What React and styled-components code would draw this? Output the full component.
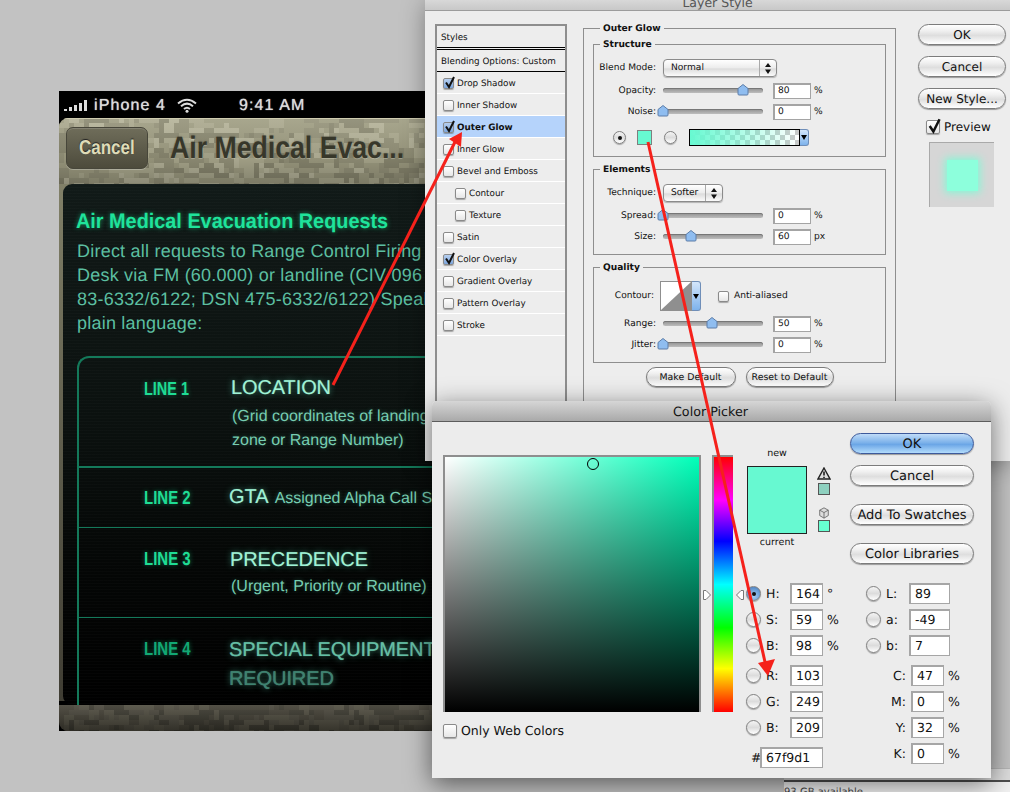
import styled, { createGlobalStyle } from "styled-components"

const Global = createGlobalStyle`
  html, body { margin: 0; padding: 0; }
  body {
    width: 1010px;
    height: 792px;
    overflow: hidden;
    background: #c2c2c2;
    font-family: "DejaVu Sans", sans-serif;
    text-rendering: geometricPrecision;
    color: #111;
  }
`

const Desktop = styled.div`
  position: relative;
  width: 1010px;
  height: 792px;
  overflow: hidden;
`

/* ---------- camo texture ---------- */

const camoColors = ["#a6a48a", "#8f8d75", "#b0ae95", "#9a987e", "#85836c"]

const Camo = ({ w, h, palette = camoColors, seed = 7 }) => {
    const blocks = []
    let r = seed
    for (let y = 0; y < h; y += 5) {
        for (let x = 0; x < w; x += 5) {
            r = (r * 1103515245 + 12345) & 0x7fffffff
            if ((r >> 8) % 5 > 1) continue
            const c = palette[(r >> 12) % palette.length]
            const bw = 5 * (1 + ((r >> 16) % 5))
            blocks.push(<rect key={x + "-" + y} x={x} y={y} width={bw} height={(r >> 20) % 2 ? 5 : 10} fill={c} />)
        }
    }
    return <CamoSvg width={w} height={h} shapeRendering="crispEdges">{blocks}</CamoSvg>
}

const CamoSvg = styled.svg`
  position: absolute;
  inset: 0;
`

/* ---------- phone ---------- */

const Phone = styled.div`
  position: absolute;
  left: 59px;
  top: 91px;
  width: 380px;
  height: 640px;
  z-index: 0;
  display: flex;
  flex-direction: column;
  background: linear-gradient(to bottom, #000 60px, #85846b 60px, #3f3d33 610px, #000 610px);
  font-family: "Liberation Sans", Arial, sans-serif;
`

const StatusBar = styled.div`
  height: 27px;
  flex: none;
  box-sizing: border-box;
  display: flex;
  align-items: center;
  padding: 2px 0 0 5px;
  color: #dcdcdc;
  font-size: 16px;
  letter-spacing: 1.1px;
  text-shadow: 0 0 1px #ddd;
`

const Carrier = styled.span`
  margin-left: 4px;
`

const Clock = styled.span`
  margin-left: 42px;
`

const WifiIcon = styled.svg`
  margin-left: 11px;
`

const NavBar = styled.div`
  position: relative;
  height: 66px;
  flex: none;
  display: flex;
  align-items: center;
  padding: 0 7px 6px;
  box-sizing: border-box;
  gap: 22px;
  overflow: hidden;
  background: #9a987e;
  border-radius: 9px 0 0 0;
`

const NavShade = styled.div`
  position: absolute;
  inset: 0;
  background: linear-gradient(to bottom, rgba(255,255,240,.14), rgba(0,0,0,.04) 60%, rgba(0,0,0,.2));
  box-shadow: inset 0 1px 0 #cfccb0;
`

const CancelButton = styled.div`
  position: relative;
  width: 82px;
  height: 42px;
  flex: none;
  box-sizing: border-box;
  display: flex;
  align-items: center;
  justify-content: center;
  border-radius: 7px;
  border: 1px solid #47463a;
  background: linear-gradient(to bottom, #6f6d5a, #4d4b3c);
  box-shadow: 0 1px 0 rgba(255,255,255,.25), inset 0 1px 0 rgba(255,255,255,.15);
  color: #dedbb8;
  font-size: 20px;
  font-weight: 700;
  text-shadow: 0 -1px 1px #222;
`

const Squeeze = styled.span`
  display: inline-block;
  white-space: nowrap;
  transform: scaleX(${p => p.$x});
  transform-origin: ${p => p.$origin || "left"} center;
`

const NavTitle = styled.div`
  position: relative;
  font-size: 31px;
  font-weight: 700;
  color: #37372a;
  text-shadow: 0 1px 1px rgba(255,255,235,.35), 0 0 2px rgba(0,0,0,.35);
`

const Screen = styled.div`
  flex: 1;
  margin-left: 4px;
  min-height: 0;
  overflow: hidden;
  border-radius: 9px 0 0 9px;
  padding: 25px 0 0 13px;
  background:
    repeating-linear-gradient(to bottom, rgba(255,255,255,.016) 0 1px, transparent 1px 3px),
    linear-gradient(to bottom, #111a18, #0b110f 45%, #040605 75%, #000);
`

const Heading = styled.div`
  font-size: 21px;
  line-height: 26px;
  font-weight: 700;
  color: #1fe39b;
  text-shadow: 0 0 6px rgba(30,230,155,.55);
`

const Intro = styled.div`
  margin: 4px 0 0 1px;
  font-size: 18px;
  line-height: 24px;
  letter-spacing: .22px;
  color: #5cbfa1;
  white-space: nowrap;
`

const LineTable = styled.div`
  margin: 21px 0 0 1px;
  border: solid #14795a;
  border-width: 2px 0 0 2px;
  border-radius: 12px 0 0 0;
`

const LineRow = styled.div`
  display: grid;
  grid-template-columns: 65px 87px 1fr;
  height: ${p => p.$h}px;
  box-sizing: border-box;
  padding-top: ${p => p.$pad}px;
  border-bottom: ${p => p.$rule}px solid #14795a;
`

const LineLabel = styled.div`
  grid-column: 2;
  font-size: 19px;
  line-height: 24px;
  font-weight: 700;
  color: ${p => p.$color || "#1fdc94"};
  text-shadow: 0 0 6px rgba(30,220,150,.45);
`

const LineValue = styled.div`
  grid-column: 3;
  margin-top: ${p => p.$top}px;
  margin-left: ${p => p.$left || 0}px;
  white-space: nowrap;
`

const Term = styled.div`
  font-size: 20px;
  line-height: 30px;
  margin-top: ${p => p.$mt || 0}px;
  letter-spacing: -.1px;
  color: ${p => p.$color || "#9ff2d5"};
  text-shadow: 0 0 1px rgba(160,245,215,.5), 0 0 6px rgba(100,240,200,.55);
`

const InlineTerm = styled.span`
  font-size: 20px;
  color: #9ff2d5;
  text-shadow: 0 0 1px rgba(160,245,215,.5), 0 0 6px rgba(100,240,200,.55);
`

const InlineNote = styled.span`
  margin-left: 6px;
  font-size: 16px;
  color: #77cdb1;
  text-shadow: 0 0 4px rgba(100,240,200,.3);
`

const Note = styled.div`
  margin: ${p => p.$mt || 0}px 0 0 1px;
  font-size: 16px;
  line-height: 24px;
  color: #77cdb1;
  text-shadow: 0 0 4px rgba(100,240,200,.3);
`

const FootBar = styled.div`
  position: relative;
  height: 26px;
  flex: none;
  overflow: hidden;
  background: #403d33;
  border-radius: 0 0 0 9px;
`

const FootShade = styled.div`
  position: absolute;
  inset: 0;
  background: linear-gradient(to bottom, rgba(255,255,240,.1), rgba(0,0,0,.3));
`

/* ---------- Layer Style window ---------- */

const LayerWindow = styled.div`
  position: absolute;
  left: 425px;
  top: 0;
  width: 585px;
  height: 461px;
  z-index: 1;
  background: #ededed;
  box-shadow: 0 4px 22px rgba(0,0,0,.35);
  font-size: 9.1px;
`

const TitleStrip = styled.div`
  height: 10px;
  overflow: hidden;
  border-bottom: 1px solid #9c9c9c;
  background: linear-gradient(to bottom, #d8d8d8, #c8c8c8);
  display: flex;
  justify-content: center;
  color: #555;
  font-size: 12.5px;
  line-height: 5px;
`

const LayerBody = styled.div`
  display: flex;
  padding: 13px 0 0 10px;
`

const StyleList = styled.div`
  width: 128px;
  height: 400px;
  flex: none;
  border: 2px solid #8e8e8e;
  border-bottom: 0;
  font-size: 8.8px;
`

const ListHead = styled.div`
  height: 19px;
  padding: 2px 0 0 4px;
  display: flex;
  align-items: center;
  border-bottom: ${p => p.$double ? "3px double #000" : "1px solid #000"};
`

const ListRow = styled.div`
  height: 19px;
  display: flex;
  align-items: center;
  gap: 3px;
  padding: 2px 0 0 ${p => p.$indent ? 18 : 6}px;
  border-bottom: 1px solid #fff;
  background: ${p => p.$active ? "#b5d3fb" : "transparent"};
  font-weight: ${p => p.$active ? 700 : 400};
`

const Box = styled.span`
  position: relative;
  width: ${p => p.$size || 9}px;
  height: ${p => p.$size || 9}px;
  flex: none;
  border: 1px solid #8a8a8a;
  border-radius: 2px;
  background: ${p => p.$tint
    ? "linear-gradient(to bottom, #b6cff0, #7da6dc)"
    : "linear-gradient(to bottom, #fff, #e6e6e6)"};
  box-shadow: 0 1px 1px rgba(0,0,0,.3);
`

const Tick = styled.svg`
  position: absolute;
  left: -1px;
  top: -3px;
`

const Check = ({ on, size, plain }) => (
    <Box $tint={on && !plain} $size={size}>
        {on && (
            <Tick width={(size || 9) + 4} height={(size || 9) + 4} viewBox="0 0 13 13">
                <path d="M3 6.5 L6 11 L11 1" fill="none" stroke="#111" strokeWidth="2" />
            </Tick>
        )}
    </Box>
)

const OuterGroup = styled.div`
  position: relative;
  margin-left: 16px;
  width: 313px;
  height: 390px;
  flex: none;
  box-sizing: border-box;
  padding: 15px 9px 0;
  border: 1px solid #8e8e8e;
  border-bottom: 0;
  margin-top: 4px;
  display: flex;
  flex-direction: column;
  gap: 12px;
`

const Group = styled.div`
  position: relative;
  height: ${p => p.$h}px;
  flex: none;
  box-sizing: border-box;
  padding-top: ${p => p.$pad}px;
  border: 1px solid #8e8e8e;
`

const Legend = styled.span`
  position: absolute;
  left: ${p => p.$left}px;
  top: -5px;
  padding: 0 3px;
  line-height: 11px;
  background: #ededed;
  font-weight: 700;
`

const FormRow = styled.div`
  display: grid;
  grid-template-columns: 69px 110px 38px auto;
  align-items: center;
  height: 21px;
  margin-top: ${p => p.$mt || 0}px;
`

const FormLabel = styled.span`
  text-align: right;
  padding-right: 7px;
`

const Slider = styled.div`
  position: relative;
  width: 100px;
  height: 5px;
  border-radius: 3px;
  background: linear-gradient(to bottom, #8f8f8f, #bdbdbd);
  box-shadow: inset 0 1px 0 #777;
`

const Thumb = styled.svg`
  position: absolute;
  left: ${p => p.$at - 6}px;
  top: -4px;
`

const RangeRow = ({ label, at, value, unit, mt }) => (
    <FormRow $mt={mt}>
        <FormLabel>{label}</FormLabel>
        <Slider>
            <Thumb $at={at} width="12" height="12" viewBox="0 0 12 12">
                <path d="M6 .5 L11 4.5 V10 Q11 11 10 11 H2 Q1 11 1 10 V4.5 Z" fill="#8fbdf0" stroke="#5d7da8" />
            </Thumb>
        </Slider>
        <NumField>{value}</NumField>
        <Unit>{unit}</Unit>
    </FormRow>
)

const NumField = styled.div`
  height: 16px;
  box-sizing: border-box;
  border: 1px solid #a4a4a4;
  border-width: 2px 1px 1px 2px;
  background: #fff;
  padding-left: 3px;
  line-height: 12px;
`

const Unit = styled.span`
  padding-left: 3px;
`

const Select = styled.div`
  position: relative;
  width: ${p => p.$w}px;
  height: 18px;
  box-sizing: border-box;
  display: flex;
  align-items: center;
  padding-left: 7px;
  border: 1px solid #8b8b8b;
  border-radius: 4px;
  background: linear-gradient(to bottom, #fff, #ececec 50%, #dcdcdc 55%, #fbfbfb);
  box-shadow: 0 1px 1px rgba(0,0,0,.25);
`

const Stepper = styled.svg`
  position: absolute;
  right: 0;
  top: 0;
  border-left: 1px solid #aaa;
`

const StepIcon = () => (
    <Stepper width="16" height="16" viewBox="0 0 16 16">
        <path d="M8 3 L11 7 H5 Z M8 14 L11 9.5 H5 Z" fill="#111" />
    </Stepper>
)

const SwatchRow = styled.div`
  display: flex;
  align-items: center;
  height: 21px;
  margin-top: 5px;
  padding-left: 19px;
`

const Radio = styled.span`
  width: ${p => p.$size || 13}px;
  height: ${p => p.$size || 13}px;
  flex: none;
  box-sizing: border-box;
  display: flex;
  align-items: center;
  justify-content: center;
  border-radius: 50%;
  border: 1px solid #808080;
  background: ${p => p.$blue
    ? "radial-gradient(circle at 50% 70%, #a6d0f6, #3f78bd)"
    : "linear-gradient(to bottom, #f4f4f4, #dcdcdc 50%, #fff)"};
  box-shadow: 0 1px 1px rgba(0,0,0,.3);
  &::after {
    content: "";
    display: ${p => p.$on ? "block" : "none"};
    width: 4px;
    height: 4px;
    border-radius: 50%;
    background: #111;
  }
`

const ColorChip = styled.div`
  width: 15px;
  height: 15px;
  margin: 0 12px 0 11px;
  box-sizing: border-box;
  border: 1px solid #7f7f7f;
  background: #67f9d1;
`

const GradientStrip = styled.div`
  width: 111px;
  height: 17px;
  margin-left: 12px;
  box-sizing: border-box;
  border: 1px solid #000;
  background:
    linear-gradient(to right, #67f9d1, rgba(103,249,209,0)),
    repeating-conic-gradient(#c9c9c9 0 25%, #fff 0 50%) 0 0 / 10px 10px;
`

const DropTab = styled.div`
  width: 8px;
  height: ${p => p.$h}px;
  display: flex;
  align-items: center;
  justify-content: center;
  border: 1px solid #6f8eb8;
  border-left: 0;
  border-radius: 0 3px 3px 0;
  background: linear-gradient(to bottom, #d4e6fb, #7eb3ec);
  &::after {
    content: "";
    border: 3px solid transparent;
    border-top: 5px solid #000;
    border-bottom: 0;
  }
`

const ContourRow = styled.div`
  display: flex;
  align-items: center;
  height: 30px;
`

const ContourLabel = styled(FormLabel)`
  width: 60px;
  padding-right: 6px;
`

const ContourBox = styled.svg`
  flex: none;
  border: 1px solid #8f8f8f;
`

const AliasCheck = styled.div`
  display: flex;
  align-items: center;
  gap: 5px;
  margin-left: 17px;
`

const ActionRow = styled.div`
  display: flex;
  justify-content: center;
  gap: 10px;
  margin-top: -8px;
`

const Pill = styled.div`
  box-sizing: border-box;
  height: ${p => p.$h || 21}px;
  width: ${p => p.$w ? p.$w + "px" : "auto"};
  padding-top: 1px;
  display: flex;
  align-items: center;
  justify-content: center;
  white-space: nowrap;
  border: 1px solid ${p => p.$primary ? "#3d5a9b" : "#7c7c7c"};
  border-radius: 11px;
  font-size: ${p => p.$font || 12}px;
  background: ${p => p.$primary
    ? "linear-gradient(to bottom, #c0dcf8, #7db2ea 45%, #6ba6e6 55%, #b3dcfc)"
    : "linear-gradient(to bottom, #fff, #f0f0f0 30%, #dedede 55%, #fff)"};
  box-shadow: 0 1px 1px rgba(0,0,0,.35);
`

const SideColumn = styled.div`
  margin: 0 0 0 22px;
  width: 88px;
  flex: none;
  display: flex;
  flex-direction: column;
  gap: 11px;
`

const PreviewCheck = styled.div`
  display: flex;
  align-items: center;
  gap: 4px;
  margin: 0 0 0 8px;
  font-size: 12px;
`

const PreviewTile = styled.div`
  margin: -3px 0 0 11px;
  width: 65px;
  height: 65px;
  display: flex;
  align-items: center;
  justify-content: center;
  background: #d6d6d6;
  border: solid #a9a9a9;
  border-width: 1px 0 0 1px;
  box-sizing: border-box;
`

const GlowSquare = styled.div`
  width: 31px;
  height: 31px;
  background: #8dffdc;
  box-shadow: 0 0 8px 2px #86f7d6;
`

/* ---------- Color Picker window ---------- */

const PickerWindow = styled.div`
  position: absolute;
  left: 432px;
  top: 401px;
  width: 559px;
  height: 377px;
  background: #ececec;
  border-radius: 5px 5px 0 0;
  box-shadow: 0 6px 26px rgba(0,0,0,.55);
  font-size: 12.5px;
  z-index: 3;
`

const PickerTitle = styled.div`
  height: 21px;
  box-sizing: border-box;
  display: flex;
  align-items: center;
  justify-content: center;
  padding-right: 2px;
  font-size: 12.7px;
  border-bottom: 1px solid #5c5c5c;
  border-radius: 5px 5px 0 0;
  background: linear-gradient(to bottom, #d6d6d6, #a9a9a9);
`

const PickerBody = styled.div`
  display: flex;
  padding: 11px 0 0 11px;
`

const SpectrumColumn = styled.div`
  width: 258px;
  flex: none;
  padding-top: 22px;
`

const Spectrum = styled.div`
  position: relative;
  height: 257px;
  box-sizing: border-box;
  border: 2px solid #8e8e8e;
  border-bottom-width: 0;
  background:
    linear-gradient(to bottom, transparent, #000),
    linear-gradient(to right, #fff, #00ffb9);
`

const PickRing = styled.div`
  position: absolute;
  left: 142px;
  top: 1px;
  width: 10px;
  height: 10px;
  border: 1px solid #000;
  border-radius: 50%;
`

const WebColors = styled.div`
  display: flex;
  align-items: center;
  gap: 4px;
  margin-top: 11px;
`

const HueBar = styled.div`
  position: relative;
  margin: 22px 0 0 11px;
  width: 21px;
  height: 257px;
  flex: none;
  box-sizing: border-box;
  border: 2px solid #8e8e8e;
  border-width: 2px 0 0 2px;
  background: linear-gradient(to bottom, #f00, #f0f 17%, #00f 33%, #0ff 50%, #0f0 67%, #ff0 83%, #f00);
`

const HueMark = styled.svg`
  position: absolute;
  top: 133px;
  ${p => p.$side}: -11px;
`

const RightPane = styled.div`
  margin-left: 13px;
  width: 232px;
  flex: none;
`

const TopPane = styled.div`
  display: flex;
  height: 150px;
`

const ComparePane = styled.div`
  display: flex;
  width: 104px;
  flex: none;
  padding-top: 15px;
`

const CompareStack = styled.div`
  margin-left: 1px;
  width: 60px;
  display: flex;
  flex-direction: column;
  align-items: center;
  font-size: 9.5px;
  line-height: 12px;
`

const CompareSwatch = styled.div`
  width: 60px;
  height: 68px;
  margin: 6px 0 3px;
  box-sizing: border-box;
  border: 1px solid #222;
  background: #67f9d1;
`

const GamutStack = styled.div`
  margin: 19px 0 0 10px;
  display: flex;
  flex-direction: column;
  align-items: center;
`

const GamutChip = styled.div`
  width: 12px;
  height: 12px;
  box-sizing: border-box;
  border: 1px solid #555;
  background: ${p => p.$color};
  margin: ${p => p.$before}px 0 ${p => p.$after || 0}px;
`

const PickerButtons = styled.div`
  width: 124px;
  display: flex;
  flex-direction: column;
`

const CancelPill = styled(Pill)`
  margin-top: 11px;
`

const SwatchPill = styled(Pill)`
  margin-top: 18px;
`

const FieldsPane = styled.div`
  display: flex;
`

const FieldColumn = styled.div`
  width: 120px;
  flex: none;
`

const Field = styled.div`
  display: flex;
  align-items: center;
  height: 21px;
  margin-bottom: ${p => p.$after ?? 5}px;
`

const FieldName = styled.span`
  width: ${p => p.$w || 24}px;
  margin-left: 5px;
  flex: none;
`

const ValueBox = styled.div`
  width: ${p => p.$w || 33}px;
  height: 21px;
  box-sizing: border-box;
  flex: none;
  border: 2px solid #a6a6a6;
  border-width: 2px 1px 1px 2px;
  background: #fff;
  padding-left: 4px;
  line-height: 17px;
`

const Suffix = styled.span`
  margin-left: 4px;
`

const HexHash = styled.span`
  margin-left: 5px;
  width: 9px;
`

const SideFields = styled.div`
  display: flex;
  flex-direction: column;
`

const CmykName = styled.span`
  width: 40px;
  text-align: right;
  padding-right: 5px;
  flex: none;
`

const BackWindow = styled.div`
  position: absolute;
  left: 784px;
  top: 768px;
  width: 226px;
  height: 24px;
  overflow: hidden;
  box-sizing: border-box;
  background: #dcdcdc;
  border-top: 1px solid #b5b5b5;
  z-index: 2;
`

const DiskStatus = styled.div`
  margin-top: 11px;
  height: 30px;
  padding-top: 5px;
  background: #f1f1f1;
  border-top: 2px solid #4e4e4e;
  font-size: 10px;
  line-height: 12px;
  color: #444;
`

const ArrowLayer = styled.svg`
  position: absolute;
  inset: 0;
  z-index: 4;
  pointer-events: none;
`

const hsbFields = [["H:", "164", "°", true], ["S:", "59", "%"], ["B:", "98", "%"]]
const rgbFields = [["R:", "103"], ["G:", "249"], ["B:", "209"]]
const labFields = [["L:", "89"], ["a:", "-49"], ["b:", "7"]]
const cmykFields = [["C:", "47"], ["M:", "0"], ["Y:", "32"], ["K:", "0"]]

const styleRows = [
    { name: "Drop Shadow", on: true },
    { name: "Inner Shadow" },
    { name: "Outer Glow", on: true, active: true },
    { name: "Inner Glow" },
    { name: "Bevel and Emboss" },
    { name: "Contour", indent: true },
    { name: "Texture", indent: true },
    { name: "Satin" },
    { name: "Color Overlay", on: true },
    { name: "Gradient Overlay" },
    { name: "Pattern Overlay" },
    { name: "Stroke" },
]

const App = () => {
    return (
        <Desktop>
            <Global />
            <Phone>
                <StatusBar>
                    <svg width="26" height="12" viewBox="0 0 26 12" shapeRendering="crispEdges">
                        <rect x="0" y="9" width="3" height="2" fill="#ddd" />
                        <rect x="5" y="7" width="3" height="4" fill="#ddd" />
                        <rect x="10" y="5" width="3" height="6" fill="#ddd" />
                        <rect x="15" y="3" width="3" height="8" fill="#ddd" />
                        <rect x="20" y="0" width="3" height="11" fill="#ddd" />
                    </svg>
                    <Carrier>iPhone 4</Carrier>
                    <WifiIcon width="20" height="15" viewBox="0 0 20 15">
                        <path d="M1 5.5 Q10 -2 19 5.5 M4 8.2 Q10 3 16 8.2 M7 11 Q10 8.4 13 11" fill="none" stroke="#ddd" strokeWidth="2" />
                        <circle cx="10" cy="13.3" r="1.5" fill="#ddd" />
                    </WifiIcon>
                    <Clock>9:41 AM</Clock>
                </StatusBar>
                <NavBar>
                    <Camo w={380} h={66} />
                    <NavShade />
                    <CancelButton><Squeeze $x={0.85} $origin="center">Cancel</Squeeze></CancelButton>
                    <NavTitle><Squeeze $x={0.86}>Air Medical Evac...</Squeeze></NavTitle>
                </NavBar>
                <Screen>
                    <Heading><Squeeze $x={0.945}>Air Medical Evacuation Requests</Squeeze></Heading>
                    <Intro>
                        Direct all requests to Range Control Firing<br />
                        Desk via FM (60.000) or landline (CIV 096<br />
                        83-6332/6122; DSN 475-6332/6122) Speak in<br />
                        plain language:
                    </Intro>
                    <LineTable>
                        <LineRow $h={110} $pad={20} $rule={2}>
                            <LineLabel><Squeeze $x={0.76}>LINE 1</Squeeze></LineLabel>
                            <LineValue $top={-5}>
                                <Term>LOCATION</Term>
                                <Note $mt={2}>(Grid coordinates of landing</Note>
                                <Note>zone or Range Number)</Note>
                            </LineValue>
                        </LineRow>
                        <LineRow $h={60} $pad={19} $rule={1}>
                            <LineLabel><Squeeze $x={0.79}>LINE 2</Squeeze></LineLabel>
                            <LineValue $top={-1} $left={-2}>
                                <InlineTerm>GTA</InlineTerm>
                                <InlineNote>Assigned Alpha Call Sign</InlineNote>
                            </LineValue>
                        </LineRow>
                        <LineRow $h={90} $pad={20} $rule={1}>
                            <LineLabel><Squeeze $x={0.79}>LINE 3</Squeeze></LineLabel>
                            <LineValue $top={-3} $left={-1}>
                                <Term>PRECEDENCE</Term>
                                <Note>(Urgent, Priority or Routine)</Note>
                            </LineValue>
                        </LineRow>
                        <LineRow $h={100} $pad={20} $rule={0}>
                            <LineLabel $color="#12a874"><Squeeze $x={0.79}>LINE 4</Squeeze></LineLabel>
                            <LineValue $top={-3} $left={-2}>
                                <Term $color="#63bfa5">SPECIAL EQUIPMENT</Term>
                                <Term $color="#3d8270" $mt={-1}>REQUIRED</Term>
                            </LineValue>
                        </LineRow>
                    </LineTable>
                </Screen>
                <FootBar>
                    <Camo w={380} h={26} seed={31} palette={["#47443a", "#38362d", "#4d4a3e"]} />
                    <FootShade />
                </FootBar>
            </Phone>

            <LayerWindow>
                <TitleStrip>Layer Style</TitleStrip>
                <LayerBody>
                    <StyleList>
                        <ListHead $double>Styles</ListHead>
                        <ListHead>Blending Options: Custom</ListHead>
                        {styleRows.map((row) => (
                            <ListRow key={row.name} $indent={row.indent} $active={row.active}>
                                <Check on={row.on} />
                                {row.name}
                            </ListRow>
                        ))}
                    </StyleList>
                    <OuterGroup>
                        <Legend $left={16}>Outer Glow</Legend>
                        <Group $h={113} $pad={12}>
                            <Legend $left={6}>Structure</Legend>
                            <FormRow>
                                <FormLabel>Blend Mode:</FormLabel>
                                <Select $w={114}>Normal<StepIcon /></Select>
                            </FormRow>
                            <RangeRow label="Opacity:" at={80} value="80" unit="%" mt={2} />
                            <RangeRow label="Noise:" at={0} value="0" unit="%" />
                            <SwatchRow>
                                <Radio $on />
                                <ColorChip />
                                <Radio />
                                <GradientStrip />
                                <DropTab $h={15} />
                            </SwatchRow>
                        </Group>
                        <Group $h={86} $pad={12}>
                            <Legend $left={6}>Elements</Legend>
                            <FormRow>
                                <FormLabel>Technique:</FormLabel>
                                <Select $w={60}>Softer<StepIcon /></Select>
                            </FormRow>
                            <RangeRow label="Spread:" at={0} value="0" unit="%" mt={2} />
                            <RangeRow label="Size:" at={28} value="60" unit="px" />
                        </Group>
                        <Group $h={96} $pad={13}>
                            <Legend $left={6}>Quality</Legend>
                            <ContourRow>
                                <ContourLabel>Contour:</ContourLabel>
                                <ContourBox width="30" height="28" viewBox="0 0 30 28">
                                    <rect width="30" height="28" fill="#fff" />
                                    <path d="M0 28 L30 0 V28 Z" fill="#8f8f8f" />
                                </ContourBox>
                                <DropTab $h={28} />
                                <AliasCheck><Check />Anti-aliased</AliasCheck>
                            </ContourRow>
                            <RangeRow label="Range:" at={49} value="50" unit="%" mt={2} />
                            <RangeRow label="Jitter:" at={0} value="0" unit="%" />
                        </Group>
                        <ActionRow>
                            <Pill $w={90} $h={20} $font={9.4}>Make Default</Pill>
                            <Pill $w={88} $h={20} $font={9.4}>Reset to Default</Pill>
                        </ActionRow>
                    </OuterGroup>
                    <SideColumn>
                        <Pill>OK</Pill>
                        <Pill>Cancel</Pill>
                        <Pill>New Style...</Pill>
                        <PreviewCheck><Check on plain size={12} />Preview</PreviewCheck>
                        <PreviewTile><GlowSquare /></PreviewTile>
                    </SideColumn>
                </LayerBody>
            </LayerWindow>

            <PickerWindow>
                <PickerTitle>Color Picker</PickerTitle>
                <PickerBody>
                    <SpectrumColumn>
                        <Spectrum><PickRing /></Spectrum>
                        <WebColors><Check size={12} />Only Web Colors</WebColors>
                    </SpectrumColumn>
                    <HueBar>
                        <HueMark $side="left" width="8" height="10" viewBox="0 0 8 10">
                            <path d="M.5 .5 H3 L7.5 5 L3 9.5 H.5 Z" fill="#fff" stroke="#777" />
                        </HueMark>
                        <HueMark $side="right" width="8" height="10" viewBox="0 0 8 10">
                            <path d="M7.5 .5 H5 L.5 5 L5 9.5 H7.5 Z" fill="#fff" stroke="#777" />
                        </HueMark>
                    </HueBar>
                    <RightPane>
                        <TopPane>
                            <ComparePane>
                                <CompareStack>
                                    <span>new</span>
                                    <CompareSwatch />
                                    <span>current</span>
                                </CompareStack>
                                <GamutStack>
                                    <svg width="14" height="13" viewBox="0 0 14 13">
                                        <path d="M7 1 L13 12 H1 Z" fill="#ddd" stroke="#222" strokeWidth="1.4" />
                                        <path d="M7 4.5 V8.5 M7 9.7 V11" stroke="#111" strokeWidth="1.5" />
                                    </svg>
                                    <GamutChip $color="#8ed0bf" $before={3} $after={12} />
                                    <svg width="12" height="12" viewBox="0 0 12 14">
                                        <path d="M6 1 L11 3.7 V10 L6 13 L1 10 V3.7 Z" fill="#ddd" stroke="#666" />
                                        <path d="M1 3.7 L6 6.5 L11 3.7 M6 6.5 V13" fill="none" stroke="#666" />
                                    </svg>
                                    <GamutChip $color="#67ffd1" $before={1} />
                                </GamutStack>
                            </ComparePane>
                            <PickerButtons>
                                <Pill $primary $font={13}>OK</Pill>
                                <CancelPill $font={13}>Cancel</CancelPill>
                                <SwatchPill $font={13}>Add To Swatches</SwatchPill>
                                <SwatchPill $font={13}>Color Libraries</SwatchPill>
                            </PickerButtons>
                        </TopPane>
                        <FieldsPane>
                            <FieldColumn>
                                {hsbFields.map(([n, v, u, on], i) => (
                                    <Field key={n} $after={i === 2 ? 9 : 5}>
                                        <Radio $size={15} $on={on} $blue={on} />
                                        <FieldName>{n}</FieldName>
                                        <ValueBox>{v}</ValueBox>
                                        <Suffix>{u}</Suffix>
                                    </Field>
                                ))}
                                {rgbFields.map(([n, v], i) => (
                                    <Field key={n} $after={i === 2 ? 9 : 5}>
                                        <Radio $size={15} />
                                        <FieldName>{n}</FieldName>
                                        <ValueBox>{v}</ValueBox>
                                    </Field>
                                ))}
                                <Field>
                                    <HexHash>#</HexHash>
                                    <ValueBox $w={63}>67f9d1</ValueBox>
                                </Field>
                            </FieldColumn>
                            <SideFields>
                                {labFields.map(([n, v], i) => (
                                    <Field key={n} $after={i === 2 ? 9 : 5}>
                                        <Radio $size={15} />
                                        <FieldName $w={23}>{n}</FieldName>
                                        <ValueBox $w={41}>{v}</ValueBox>
                                    </Field>
                                ))}
                                {cmykFields.map(([n, v]) => (
                                    <Field key={n}>
                                        <CmykName>{n}</CmykName>
                                        <ValueBox>{v}</ValueBox>
                                        <Suffix>%</Suffix>
                                    </Field>
                                ))}
                            </SideFields>
                        </FieldsPane>
                    </RightPane>
                </PickerBody>
            </PickerWindow>

            <BackWindow><DiskStatus>93 GB available</DiskStatus></BackWindow>

            <ArrowLayer width="1010" height="792">
                <g stroke="#f5211b" strokeWidth="3" fill="#f5211b">
                    <line x1="333" y1="385" x2="456" y2="140" />
                    <line x1="648" y1="142" x2="765" y2="662" />
                </g>
                <path d="M462 132 L449 139 L461 147 Z" fill="#f5211b" />
                <path d="M768 676 L758 663 L775 659 Z" fill="#f5211b" />
            </ArrowLayer>
        </Desktop>
    )
}

export default App
